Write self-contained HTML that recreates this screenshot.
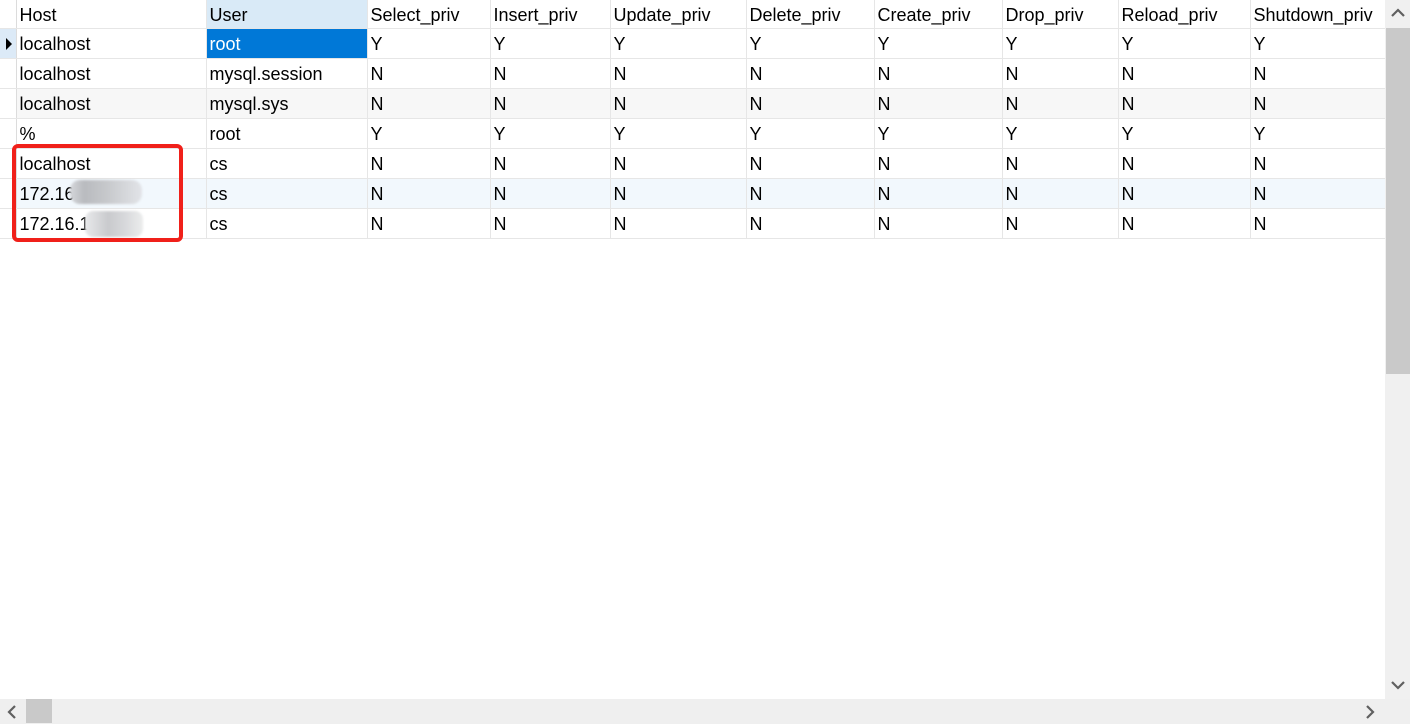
<!DOCTYPE html>
<html><head><meta charset="utf-8"><style>
*{margin:0;padding:0;box-sizing:border-box}
body{width:1410px;height:724px;background:#fff;position:relative;overflow:hidden;font-family:"Segoe UI","Liberation Sans","Noto Sans CJK SC",sans-serif;font-size:18px;color:#000}
table{position:absolute;left:0;top:0;border-collapse:collapse;table-layout:fixed}
td{height:30px;border-right:1px solid #e6e6e6;border-bottom:1px solid #e6e6e6;padding:2px 0 0 3px;white-space:nowrap;overflow:hidden;line-height:27px}
tr.h td{height:28px;line-height:26px}
td.ind{padding:0;border-right:1px solid #dcdcdc}
.sel{background:#0078d7;color:#fff}
.g td{background:#f7f7f7}
.b td{background:#f2f8fd}
.blur{position:absolute;background:linear-gradient(90deg,#d6d8dc,#b9bbbf 20%,#c6c8cb 50%,#e2e4e8);filter:blur(1px)}
</style></head><body>
<table>
<colgroup><col style="width:16px"><col style="width:190px"><col style="width:161px"><col style="width:123px"><col style="width:120px"><col style="width:136px"><col style="width:128px"><col style="width:128px"><col style="width:116px"><col style="width:132px"><col style="width:135px"></colgroup>
<tr class="h"><td class="ind"></td><td>Host</td><td style="background:#d9eaf7">User</td><td>Select_priv</td><td>Insert_priv</td><td>Update_priv</td><td>Delete_priv</td><td>Create_priv</td><td>Drop_priv</td><td>Reload_priv</td><td>Shutdown_priv</td></tr>
<tr><td class="ind" style="background:#dceaf7;position:relative"><svg width="8" height="12" style="position:absolute;left:6px;top:9px"><path d="M0 0L6 6L0 12Z" fill="#000"/></svg></td><td>localhost</td><td class="sel">root</td><td>Y</td><td>Y</td><td>Y</td><td>Y</td><td>Y</td><td>Y</td><td>Y</td><td>Y</td></tr>
<tr><td class="ind"></td><td>localhost</td><td>mysql.session</td><td>N</td><td>N</td><td>N</td><td>N</td><td>N</td><td>N</td><td>N</td><td>N</td></tr>
<tr class="g"><td class="ind" style="background:#fff"></td><td>localhost</td><td>mysql.sys</td><td>N</td><td>N</td><td>N</td><td>N</td><td>N</td><td>N</td><td>N</td><td>N</td></tr>
<tr><td class="ind"></td><td>%</td><td>root</td><td>Y</td><td>Y</td><td>Y</td><td>Y</td><td>Y</td><td>Y</td><td>Y</td><td>Y</td></tr>
<tr><td class="ind"></td><td>localhost</td><td>cs</td><td>N</td><td>N</td><td>N</td><td>N</td><td>N</td><td>N</td><td>N</td><td>N</td></tr>
<tr class="b"><td class="ind" style="background:#fff"></td><td>172.16</td><td>cs</td><td>N</td><td>N</td><td>N</td><td>N</td><td>N</td><td>N</td><td>N</td><td>N</td></tr>
<tr><td class="ind"></td><td>172.16.1</td><td>cs</td><td>N</td><td>N</td><td>N</td><td>N</td><td>N</td><td>N</td><td>N</td><td>N</td></tr>
</table>
<div class="blur" style="left:70px;top:180px;width:72px;height:24px;border-radius:10px"></div>
<div class="blur" style="left:85px;top:211px;width:58px;height:26px;border-radius:8px;background:linear-gradient(90deg,#e8e9eb,#c9cacd 40%,#d8d9dc 70%,#eceded)"></div>
<div style="position:absolute;left:12px;top:144px;width:171px;height:98px;border:4px solid #f0201a;border-radius:6px"></div>
<div style="position:absolute;left:1385px;top:0;width:25px;height:699px;background:#f0f0f0"></div>
<div style="position:absolute;left:1386px;top:28px;width:24px;height:346px;background:#c9c9c9"></div>
<svg style="position:absolute;left:1391px;top:8px" width="14" height="10"><path d="M1 8L7 2L13 8" stroke="#606060" stroke-width="2.2" fill="none"/></svg>
<svg style="position:absolute;left:1391px;top:680px" width="14" height="10"><path d="M1 2L7 8L13 2" stroke="#606060" stroke-width="2.2" fill="none"/></svg>
<div style="position:absolute;left:0;top:699px;width:1410px;height:25px;background:#efefef"></div>
<div style="position:absolute;left:26px;top:699px;width:26px;height:24px;background:#c9c9c9"></div>
<svg style="position:absolute;left:7px;top:705px" width="10" height="14"><path d="M8 1L2 7L8 13" stroke="#606060" stroke-width="2.2" fill="none"/></svg>
<svg style="position:absolute;left:1365px;top:705px" width="10" height="14"><path d="M2 1L8 7L2 13" stroke="#606060" stroke-width="2.2" fill="none"/></svg>
</body></html>
